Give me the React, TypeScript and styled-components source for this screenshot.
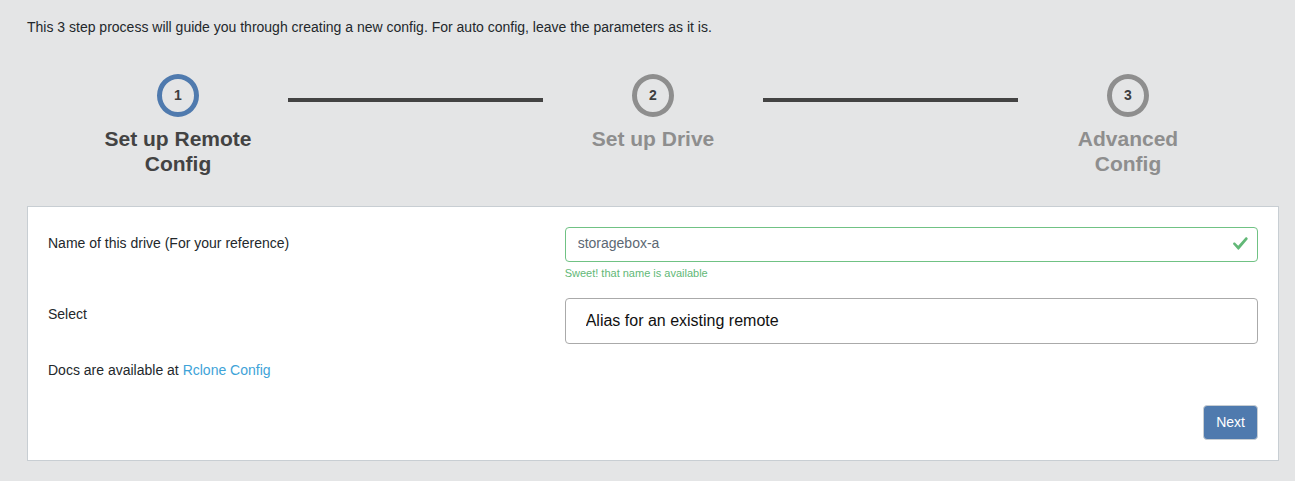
import React, { useState } from "react";
import styled, { createGlobalStyle } from "styled-components";

const GlobalStyle = createGlobalStyle`
  *, *::before, *::after { box-sizing: border-box; }
  body {
    margin: 0;
    background: #e4e5e6;
    color: #23282c;
    font: 14px/20px "Liberation Sans", Arial, sans-serif;
  }
`;

const Page = styled.main`
  padding: 17px 16px 20px 27px;
`;

const Intro = styled.p`
  margin: 0 0 37px;
`;

const Stepper = styled.ol`
  display: grid;
  grid-template-columns: 220px 1fr 220px 1fr 220px;
  align-items: start;
  margin: 0 41px;
  padding: 0;
  min-height: 132px;
  list-style: none;
`;

const Step = styled.li<{ $active: boolean }>`
  display: flex;
  flex-direction: column;
  align-items: center;
  color: ${(p) => (p.$active ? "#434343" : "#8e8e8e")};
`;

const StepCircle = styled.span<{ $active: boolean }>`
  display: flex;
  align-items: center;
  justify-content: center;
  width: 42px;
  height: 43px;
  padding-bottom: 2px;
  border: 5px solid ${(p) => (p.$active ? "#4f7aae" : "#8e8e8e")};
  border-radius: 50%;
  color: #3e3e3e;
  font-weight: 700;
`;

const StepTitle = styled.span`
  width: 152px;
  margin-top: 9px;
  font-size: 21px;
  font-weight: 700;
  line-height: 25px;
  text-align: center;
`;

const Connector = styled.li`
  height: 4px;
  margin-top: 24px;
  background: #434343;
`;

const Panel = styled.form`
  padding: 20px;
  border: 1px solid #c8ced3;
  background: #fff;
`;

const Row = styled.div`
  display: flex;
  margin: 0 -15px 16px;
`;

const Label = styled.label`
  flex: 0 0 41.6667%;
  padding: 6px 15px;
`;

const Field = styled.div`
  flex: 1;
  min-width: 0;
  padding: 0 15px;
`;

const InputWrap = styled.div`
  position: relative;
`;

const NameInput = styled.input`
  display: block;
  width: 100%;
  height: 35px;
  padding: 0 36px 3px 12px;
  border: 1px solid #70c284;
  border-radius: 4px;
  outline: 0;
  background: #fff;
  color: #5c6873;
  font: inherit;
`;

const TypeInput = styled.input`
  display: block;
  width: 100%;
  height: 46px;
  padding: 0 20px;
  border: 1px solid #aaa;
  border-radius: 4px;
  outline: 0;
  background: #fff;
  color: #111;
  font: 300 16px/20px "Liberation Sans", Arial, sans-serif;
`;

const ValidMark = styled.svg`
  position: absolute;
  top: 10px;
  right: 10px;
  width: 15px;
  height: 13px;
  fill: #62b877;
`;

const Feedback = styled.div`
  margin-top: 3px;
  padding-bottom: 1px;
  color: #62b877;
  font-size: 11px;
  line-height: 16px;
`;

const Docs = styled.p`
  margin: 0 0 25px;
`;

const DocsLink = styled.a`
  color: #3ea3d8;
  text-decoration: none;
`;

const Actions = styled.div`
  display: flex;
  justify-content: flex-end;
`;

const NextButton = styled.button`
  height: 35px;
  padding: 0 12px 2px;
  border: 1px solid #c8ced3;
  border-radius: 4px;
  background: #4f7aae;
  color: #fff;
  font: inherit;
  cursor: pointer;
`;

const steps = ["Set up Remote Config", "Set up Drive", "Advanced Config"];

export default function App() {
  const [name, setName] = useState("storagebox-a");
  const [remoteType, setRemoteType] = useState("Alias for an existing remote");

  return (
    <Page>
      <GlobalStyle />
      <Intro>
        This 3 step process will guide you through creating a new config. For
        auto config, leave the parameters as it is.
      </Intro>
      <Stepper>
        {steps.map((title, i) => (
          <React.Fragment key={title}>
            {i > 0 && <Connector aria-hidden="true" />}
            <Step $active={i === 0}>
              <StepCircle $active={i === 0}>{i + 1}</StepCircle>
              <StepTitle>{title}</StepTitle>
            </Step>
          </React.Fragment>
        ))}
      </Stepper>
      <Panel onSubmit={(e) => e.preventDefault()}>
        <Row>
          <Label htmlFor="driveName">Name of this drive (For your reference)</Label>
          <Field>
            <InputWrap>
              <NameInput
                id="driveName"
                type="text"
                value={name}
                onChange={(e) => setName(e.target.value)}
              />
              <ValidMark viewBox="0 0 15 13" aria-hidden="true">
                <path d="M5.1 12.7 L.4 7.5 C-.1 6.9 0 6.3.5 5.8 C1.1 5.3 1.9 5.3 2.4 5.9 L5.2 8.8 L12.3.8 C12.8.2 13.6.2 14.2.7 C14.8 1.2 14.9 2 14.4 2.6 L5.9 12.6 C5.7 12.9 5.3 12.9 5.1 12.7z" />
              </ValidMark>
            </InputWrap>
            <Feedback>Sweet! that name is available</Feedback>
          </Field>
        </Row>
        <Row>
          <Label htmlFor="driveType">Select</Label>
          <Field>
            <TypeInput
              id="driveType"
              type="text"
              value={remoteType}
              onChange={(e) => setRemoteType(e.target.value)}
            />
          </Field>
        </Row>
        <Docs>
          Docs are available at <DocsLink href="#rclone-config">Rclone Config</DocsLink>
        </Docs>
        <Actions>
          <NextButton type="submit">Next</NextButton>
        </Actions>
      </Panel>
    </Page>
  );
}
